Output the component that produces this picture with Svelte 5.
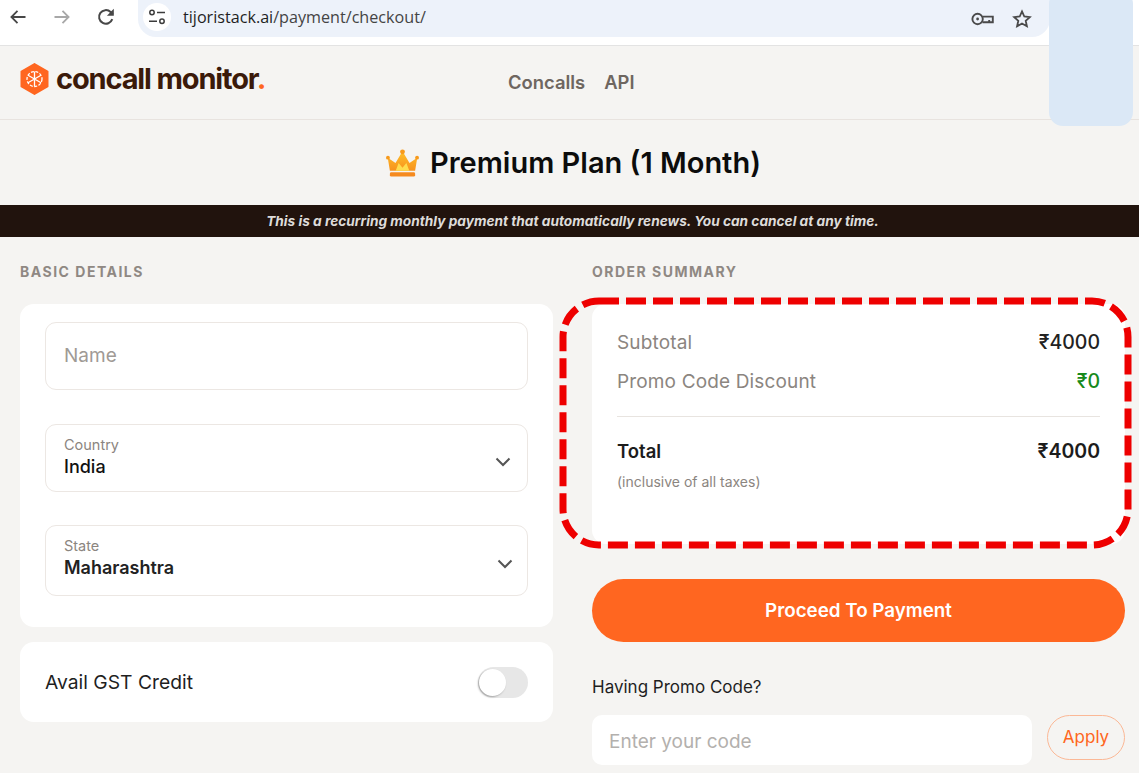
<script lang="ts">
  const rows = [
    { label: 'Subtotal', value: '₹4000', green: false },
    { label: 'Promo Code Discount', value: '₹0', green: true }
  ];
  let gst = $state(false);
</script>

<div class="page">
  <div class="toolbar">
    <button class="nav-btn" aria-label="Back">
      <svg width="18" height="18" viewBox="0 0 18 18" fill="none" stroke="#474747" stroke-width="1.8"><path d="M16.500 9H2.500M8.500 2.800 2.400 9l6.100 6.200"/></svg>
    </button>
    <button class="nav-btn" aria-label="Forward">
      <svg width="18" height="18" viewBox="0 0 18 18" fill="none" stroke="#a8a8a8" stroke-width="1.8"><path d="M1.500 9h14M9.500 2.800 15.600 9l-6.100 6.200"/></svg>
    </button>
    <button class="nav-btn" aria-label="Reload">
      <svg width="18" height="18" viewBox="0 0 18 18" fill="none" stroke="#474747" stroke-width="2"><path d="M15.300 11.200A6.800 6.800 0 1 1 13.600 4L15.800 6.200"/><path d="M16.800 .8v6.900h-6.900" fill="#474747" stroke="none"/></svg>
    </button>
    <div class="omnibox">
      <span class="site-btn">
        <svg width="18" height="16" viewBox="0 0 18 16" fill="none" stroke="#3c3c3c" stroke-width="1.500"><circle cx="4" cy="3.500" r="2.200"/><path d="M9 3.500h8M1 12.200h8"/><circle cx="14" cy="12.200" r="2.200"/></svg>
      </span>
      <span class="url">tijoristack.ai<span class="url-path">/payment/checkout/</span></span>
      <span class="omni-icons">
        <svg width="23" height="14" viewBox="0 0 23 14" fill="none" stroke="#4a4a4a" stroke-width="1.900"><circle cx="6.600" cy="7" r="5.200"/><circle cx="6.600" cy="7" r="1.400" fill="#4a4a4a" stroke="none"/><path d="M11.800 4.600h10v5.600h-3.600V8M18 10.200h-6.600"/></svg>
        <svg width="20" height="20" viewBox="0 0 20 20" fill="none" stroke="#4a4a4a" stroke-width="1.800"><path d="M10 2.400l2.300 5.100 5.500.6-4.100 3.700 1.200 5.500L10 14.500l-4.900 2.800 1.200-5.500-4.100-3.700 5.500-.6z"/></svg>
      </span>
    </div>
  </div>

  <header class="site-nav">
    <div class="logo">
      <svg width="29" height="32" viewBox="0 0 29 32">
        <path d="M14.500 1 27.500 8.500v15L14.500 31 1.500 23.500v-15z" fill="#ff6620" stroke="#ff6620" stroke-width="2" stroke-linejoin="round"/>
        <g stroke="#fff" stroke-width="1.300" fill="none">
          <circle cx="14.500" cy="16" r="7.500" stroke-dasharray="3 1.500"/>
          <path d="M14.500 8.500v15M8 12.200l13 7.600M8 19.800l13-7.600"/>
        </g>
      </svg>
      <span class="logo-text">concall monitor<span class="logo-dot">.</span></span>
    </div>
    <nav class="links">
      <span>Concalls</span>
      <span>API</span>
    </nav>
  </header>

  <div class="plan-title">
    <svg width="33" height="30" viewBox="0 0 34 30">
      <defs>
        <linearGradient id="crown" x1="0" y1="0" x2="0" y2="1">
          <stop offset="0" stop-color="#ffc02a"/>
          <stop offset="1" stop-color="#f7921e"/>
        </linearGradient>
      </defs>
      <path d="M4 23 1.800 9.500l8 5.500L17 3l7.200 12 8-5.500L30 23z" fill="url(#crown)"/>
      <path d="M10 23l3-8 4 5 4-5 3 8z" fill="#ffdc4e"/>
      <circle cx="17" cy="3.500" r="2.500" fill="#f79a1c"/><circle cx="2" cy="9.500" r="2" fill="#f79a1c"/><circle cx="32" cy="9.500" r="2" fill="#f79a1c"/>
      <rect x="4" y="24.500" width="26" height="4.500" rx="1.500" fill="#f58a1f"/>
    </svg>
    <h1>Premium Plan (1 Month)</h1>
  </div>

  <div class="banner">This is a recurring monthly payment that automatically renews. You can cancel at any time.</div>

  <main class="columns">
    <section>
      <h2>BASIC DETAILS</h2>
      <div class="card form">
        <input class="field name" placeholder="Name" />
        <div class="field select country">
          <div>
            <div class="select-label">Country</div>
            <div class="select-value">India</div>
          </div>
          <svg class="chevron" width="16" height="10" viewBox="0 0 16 10" fill="none" stroke="#555" stroke-width="2"><path d="M1.500 1.500 8 8l6.500-6.500"/></svg>
        </div>
        <div class="field select state">
          <div class="state-text">
            <div class="select-label">State</div>
            <div class="select-value bold">Maharashtra</div>
          </div>
          <svg class="chevron" width="16" height="10" viewBox="0 0 16 10" fill="none" stroke="#555" stroke-width="2"><path d="M1.500 1.500 8 8l6.500-6.500"/></svg>
        </div>
      </div>
      <div class="card gst">
        <span>Avail GST Credit</span>
        <button class="toggle" class:on={gst} aria-label="Avail GST Credit" onclick={() => (gst = !gst)}><span class="knob"></span></button>
      </div>
    </section>

    <section>
      <h2>ORDER SUMMARY</h2>
      <div class="card summary">
        {#each rows as r}
          <div class="row">
            <span class="row-label">{r.label}</span>
            <span class="row-value" class:green={r.green}>{r.value}</span>
          </div>
        {/each}
        <div class="divider"></div>
        <div class="row total">
          <span>Total</span>
          <span>₹4000</span>
        </div>
        <div class="taxes">(inclusive of all taxes)</div>
      </div>
      <button class="proceed">Proceed To Payment</button>
      <div class="promo-label">Having Promo Code?</div>
      <div class="promo">
        <input class="promo-input" placeholder="Enter your code" />
        <button class="apply">Apply</button>
      </div>
    </section>
  </main>

  <!-- blanked out area + red marker from the screenshot -->
  <div class="blank"></div>
  <svg class="marker" width="580" height="260" viewBox="0 0 580 260" fill="none">
    <rect x="6" y="6" width="565" height="244" rx="36" stroke="#ee0000" stroke-width="7" stroke-dasharray="20 7"/>
  </svg>
</div>

<style>
  :global(body) { margin: 0; background: #f5f4f2; }
  .page {
    position: relative; width: 1139px; height: 773px; overflow: hidden;
    background: #f5f4f2; color: #1c1c1c;
    font-family: Inter, "Liberation Sans", sans-serif;
  }
  button { font-family: inherit; cursor: pointer; }

  .toolbar {
    display: flex; align-items: flex-start; height: 45px; background: #fff;
    border-bottom: 1px solid #e3e3e3; padding-left: 9px; box-sizing: content-box;
  }
  .nav-btn {
    width: 44px; height: 33px; padding: 0; border: none; background: none;
    display: flex; align-items: center; justify-content: flex-start;
  }
  .omnibox {
    display: flex; align-items: center; width: 912px; height: 37px; margin-left: -3px;
    padding-left: 5px; box-sizing: border-box;
    background: #edf2fa; border-radius: 0 0 18px 18px;
  }
  .site-btn {
    width: 28px; height: 28px; border-radius: 50%; background: #fff;
    display: flex; align-items: center; justify-content: center; margin-top: -3px;
  }
  .url {
    margin: -4px 0 0 12px; font-family: "Open Sans", sans-serif; font-size: 16.150px; color: #1f1f1f;
  }
  .url-path { color: #444; }
  .omni-icons { display: flex; align-items: center; gap: 18px; margin-left: auto; padding-right: 18px; }

  .site-nav {
    position: relative; height: 73px; border-bottom: 1px solid #e8e3df;
    display: flex; align-items: center; padding-left: 20px;
  }
  .logo { display: flex; align-items: center; gap: 7px; margin-top: -8px; }
  .logo-text { font-size: 29px; font-weight: 700; letter-spacing: -1.150px; color: #3b1a0a; }
  .logo-dot { color: #ff6620; }
  .links {
    position: absolute; left: 508px; top: 25px; display: flex; gap: 19px;
    font-size: 18.400px; font-weight: 600; color: #6e6660;
  }

  .plan-title {
    height: 85px; display: flex; align-items: center; justify-content: center; gap: 11px;
    padding-left: 8px;
  }
  .plan-title h1 { margin: 0; font-size: 29px; font-weight: 600; color: #0c0c0c; }

  .banner {
    height: 32px; background: #21130d; color: #dedcda;
    display: flex; align-items: center; justify-content: center;
    font-size: 13.700px; font-weight: 700; font-style: italic; padding-left: 6px;
  }

  .columns {
    display: grid; grid-template-columns: 533px 533px; gap: 39px; padding: 27px 0 0 20px;
  }
  h2 { margin: 0 0 24px; font-size: 14px; line-height: 16px; font-weight: 700; letter-spacing: 1.500px; color: #8f8883; }
  .card { background: #fff; border-radius: 14px; }

  .form { height: 323px; box-sizing: border-box; padding: 18px 25px 0; display: flex; flex-direction: column; }
  .field {
    box-sizing: border-box; width: 100%; background: #fff;
    border: 1.500px solid #ece7e3; border-radius: 11px; padding: 0 18px; font-family: inherit;
  }
  .name { height: 68px; padding-bottom: 2px; font-size: 19px; outline: none; }
  .name::placeholder { color: #a09a95; }
  .select { display: flex; align-items: center; justify-content: space-between; padding-right: 16px; }
  .country { height: 68px; margin-top: 34px; }
  .state { height: 71px; margin-top: 33px; padding-right: 14px; }
  .state-text { margin-top: -3px; }
  .chevron { margin-top: 7px; }
  .select-label { font-size: 14.500px; line-height: 16px; margin-bottom: 2px; color: #8b8580; }
  .select-value { font-size: 18px; line-height: 24px; font-weight: 500; color: #111; }
  .select-value.bold { font-weight: 600; color: #222; }

  .gst {
    margin-top: 15px; height: 80px; padding: 0 25px; display: flex; align-items: center;
    justify-content: space-between; font-size: 19.300px; color: #1f1f1f;
  }
  .toggle {
    position: relative; width: 50px; height: 31px; padding: 0; border: none;
    border-radius: 16px; background: #e7e7e7;
  }
  .toggle.on { background: #ff6620; }
  .knob {
    position: absolute; left: 1px; top: 2px; width: 27px; height: 27px; border-radius: 50%;
    background: #fff; box-shadow: -1px 1px 2px #0000004d;
  }
  .toggle.on .knob { left: 22px; }

  .summary { height: 240px; box-sizing: border-box; padding: 24px 25px 0; }
  .row { display: flex; justify-content: space-between; align-items: center; height: 28px; margin-bottom: 11px; font-size: 19px; }
  .row-label { color: #8b8580; letter-spacing: .15px; }
  .row-value { color: #222; font-weight: 500; font-size: 19.500px; }
  .row-value.green { color: #178a1b; }
  .divider { height: 1px; background: #e8e4e0; margin-top: 21px; }
  .total { margin: 20px 0 0; font-size: 18.500px; font-weight: 600; color: #1c1c1c; }
  .total span:last-child { font-size: 19.500px; }
  .taxes { margin-top: 7px; font-size: 14px; line-height: 20px; color: #8b8580; }

  .proceed {
    display: block; width: 533px; height: 63px; margin-top: 35px; border: none; border-radius: 32px;
    background: #ff6620; color: #fff; font-size: 18.800px; font-weight: 600;
  }
  .promo-label { margin-top: 35px; font-size: 17px; line-height: 20px; color: #1f1f1f; }
  .promo { display: flex; align-items: flex-start; gap: 15px; margin-top: 18px; }
  .promo-input {
    box-sizing: border-box; width: 440px; height: 50px; padding: 2px 17px 0; border: none; border-radius: 10px;
    background: #fff; font-family: inherit; font-size: 19px; outline: none;
  }
  .promo-input::placeholder { color: #b3b0ad; }
  .apply {
    width: 78px; height: 45px; padding: 0 0 1px; background: none; border: 1.500px solid #fbb896;
    border-radius: 23px; color: #ff6620; font-size: 17px;
  }

  .blank {
    position: absolute; left: 1049px; top: -10px; width: 84px; height: 136px;
    background: #dbe8f6; border-radius: 14px;
  }
  .marker { position: absolute; left: 557px; top: 295px; pointer-events: none; }
</style>
